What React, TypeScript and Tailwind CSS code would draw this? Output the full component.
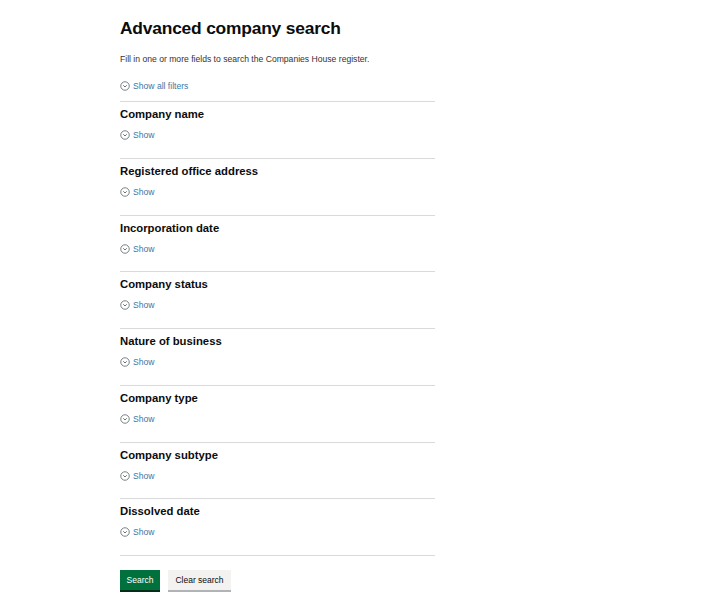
import { FC } from "react";

const sections = [
  "Company name",
  "Registered office address",
  "Incorporation date",
  "Company status",
  "Nature of business",
  "Company type",
  "Company subtype",
  "Dissolved date",
];

const ChevronCircle: FC = () => (
  <svg width="10" height="10" viewBox="0 0 20 20" className="shrink-0">
    <circle cx="10" cy="10" r="8.5" fill="none" stroke="#505a5f" strokeWidth="1.5" />
    <path d="M6.5 8.5 L10 12 L13.5 8.5" fill="none" stroke="#505a5f" strokeWidth="1.7" />
  </svg>
);

const ShowLink: FC<{ label: string }> = ({ label }) => (
  <button type="button" className="flex items-center gap-[3px] text-[8.6px] leading-[10px] text-[#3b77a8]">
    <ChevronCircle />
    <span>{label}</span>
  </button>
);

const App: FC = () => {
  return (
    <div
      className="w-[720px] h-[609px] bg-white text-[#0b0c0c] overflow-hidden"
      style={{ fontFamily: '"Liberation Sans", Arial, sans-serif' }}
    >
      <div className="ml-[120px] w-[315px] pt-[17px]">
        {/* Title */}
        <h1 className="text-[17.4px] leading-[22px] font-bold tracking-[-0.2px]">
          Advanced company search
        </h1>
        <p className="mt-[15px] text-[8.6px] leading-[10px] text-[#333]">
          Fill in one or more fields to search the Companies House register.
        </p>
        <div className="mt-[17px] pb-[10px]">
          <ShowLink label="Show all filters" />
        </div>

        {/* Filter sections */}
        {sections.map((title) => (
          <div key={title} className="h-[56.75px] border-t border-[#d8dadb] pt-[6px]">
            <p className="text-[11.3px] leading-[13px] font-bold">{title}</p>
            <div className="mt-[9px]">
              <ShowLink label="Show" />
            </div>
          </div>
        ))}

        <div className="border-t border-[#d8dadb] pt-[14px] flex gap-[8px]">
          <button
            type="button"
            className="h-[20px] w-[40px] bg-[#00703c] text-white text-[8.5px] shadow-[0_2px_0_#002d18]"
          >
            Search
          </button>
          <button
            type="button"
            className="h-[20px] w-[63px] bg-[#f3f2f1] text-[#0b0c0c] text-[8.5px] shadow-[0_2px_0_#b1b4b6]"
          >
            Clear search
          </button>
        </div>
      </div>
    </div>
  );
};

export default App;
